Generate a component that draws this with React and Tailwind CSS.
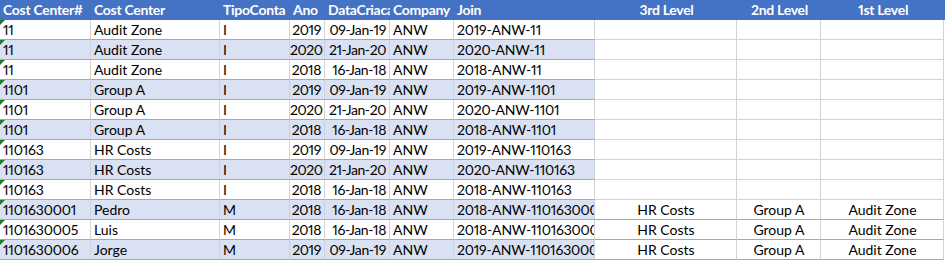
import React from "react";

const grid =
  "grid grid-cols-[91px_129px_70px_35px_65px_64px_141px_142px_84px_123px]";

const headers = [
  "Cost Center#",
  "Cost Center",
  "TipoConta",
  "Ano",
  "DataCriacao",
  "Company",
  "Join",
  "3rd Level",
  "2nd Level",
  "1st Level",
];

const rows = [
  ["11", "Audit Zone", "I", "2019", "09-Jan-19", "ANW", "2019-ANW-11"],
  ["11", "Audit Zone", "I", "2020", "21-Jan-20", "ANW", "2020-ANW-11"],
  ["11", "Audit Zone", "I", "2018", "16-Jan-18", "ANW", "2018-ANW-11"],
  ["1101", "Group A", "I", "2019", "09-Jan-19", "ANW", "2019-ANW-1101"],
  ["1101", "Group A", "I", "2020", "21-Jan-20", "ANW", "2020-ANW-1101"],
  ["1101", "Group A", "I", "2018", "16-Jan-18", "ANW", "2018-ANW-1101"],
  ["110163", "HR Costs", "I", "2019", "09-Jan-19", "ANW", "2019-ANW-110163"],
  ["110163", "HR Costs", "I", "2020", "21-Jan-20", "ANW", "2020-ANW-110163"],
  ["110163", "HR Costs", "I", "2018", "16-Jan-18", "ANW", "2018-ANW-110163"],
  ["1101630001", "Pedro", "M", "2018", "16-Jan-18", "ANW", "2018-ANW-1101630001", "HR Costs", "Group A", "Audit Zone"],
  ["1101630005", "Luis", "M", "2018", "16-Jan-18", "ANW", "2018-ANW-1101630005", "HR Costs", "Group A", "Audit Zone"],
  ["1101630006", "Jorge", "M", "2019", "09-Jan-19", "ANW", "2019-ANW-1101630006", "HR Costs", "Group A", "Audit Zone"],
];

const Cell = ({ children, className }) => (
  <div
    className={`relative h-5 overflow-hidden whitespace-nowrap border-b border-r pl-[3px] pr-[2px] leading-[19px] ${className}`}
  >
    {children}
  </div>
);

export default function App() {
  return (
    <div className="h-[262px] w-[945px] overflow-hidden bg-white font-['Lato',sans-serif] text-[14px] text-black proportional-nums">
      {/* header */}
      <div className={`${grid} h-5 bg-[#4472C4] font-bold text-white tracking-[-0.3px]`}>
        {headers.map((h, i) => (
          <div
            key={h}
            className={`h-5 overflow-hidden whitespace-nowrap pl-[3px] pr-[2px] leading-5 ${
              i > 6 ? "text-center" : ""
            }`}
          >
            {h}
          </div>
        ))}
      </div>

      {/* body */}
      {rows.map((r, ri) => {
        const band = ri % 2 === 1;
        const levels = ri > 8;
        const tableBg = band ? "bg-[#D9E1F2]" : "bg-white";
        return (
          <div key={ri} className={grid}>
            {r.slice(0, 7).map((v, ci) => (
              <Cell
                key={ci}
                className={`${tableBg} border-b-[#8EA9DB] ${
                  band ? "border-r-[#C9D2E4]" : "border-r-[#D4D4D4]"
                } ${ci === 3 || ci === 4 ? "text-right tracking-[-0.4px] !pr-[3px] !pl-0" : ""} ${
                  ci === 0 || ci === 6 ? "tracking-[-0.2px]" : ""
                }`}
              >
                {ci === 0 && (
                  <span className="absolute left-0 top-0 h-0 w-0 border-r-[5px] border-t-[5px] border-r-transparent border-t-[#1E7B34]" />
                )}
                {v}
              </Cell>
            ))}
            {[7, 8, 9].map((ci) => (
              <Cell
                key={ci}
                className={`bg-white text-center border-r-[#D4D4D4] ${
                  levels ? "border-b-[#8EA9DB]" : "border-b-[#D4D4D4]"
                }`}
              >
                {r[ci] || ""}
              </Cell>
            ))}
          </div>
        );
      })}
    </div>
  );
}
